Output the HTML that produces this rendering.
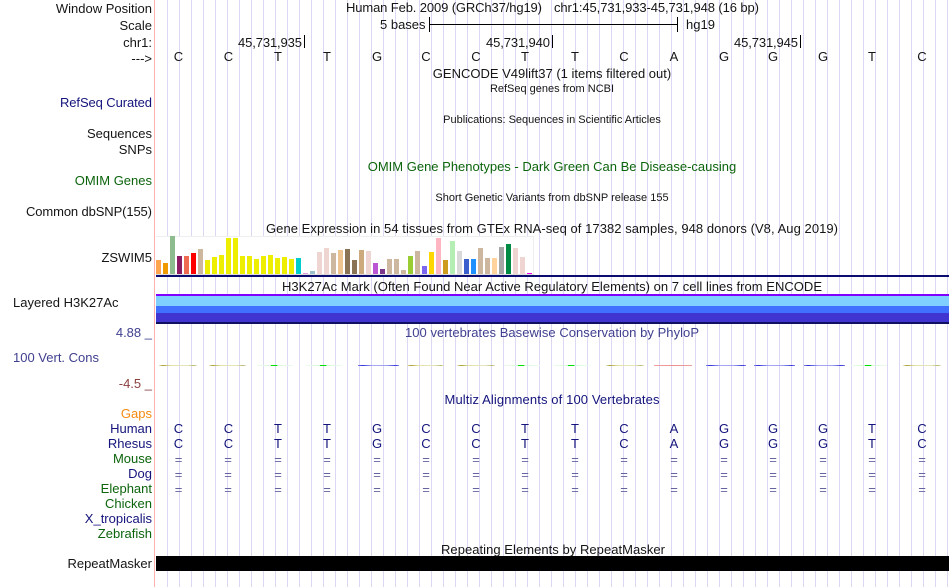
<!DOCTYPE html>
<html lang="en"><head><meta charset="utf-8"><title>Genome Browser</title>
<style>
html,body{margin:0;padding:0;background:#fff;width:950px;height:587px;overflow:hidden}
#g{position:absolute;left:156px;top:0;width:794px;height:587px;background:repeating-linear-gradient(to right,transparent 0,transparent 11px,#dcd8f4 11px,#dcd8f4 12px)}
#p{position:absolute;left:154px;top:0;width:1px;height:587px;background:#ffb0b0}
svg{position:absolute;left:0;top:0}
text{font-family:"Liberation Sans",sans-serif;font-size:13px;fill:#151515}
.r{text-anchor:end}.c{text-anchor:middle}.s{font-size:11px}
.n{fill:#14147c}.d{fill:#0c640c}.v{fill:#404090}.q{fill:#6464a0}
.b text,.b{text-anchor:middle}
</style></head><body>
<div id="g"></div><div id="p"></div>
<svg width="950" height="587" viewBox="0 0 950 587">
<defs>
<linearGradient id="o"><stop offset="0" stop-color="#e8e8c8"/><stop offset=".1" stop-color="#a8a030"/><stop offset=".3" stop-color="#e2e2a8"/><stop offset=".75" stop-color="#e6e6c0"/><stop offset=".92" stop-color="#b8b870"/><stop offset="1" stop-color="#e8e8d0"/></linearGradient>
<linearGradient id="u"><stop offset="0" stop-color="#8888e8"/><stop offset=".1" stop-color="#3030d8"/><stop offset=".35" stop-color="#a8a8f4"/><stop offset=".7" stop-color="#a0a0f0"/><stop offset=".92" stop-color="#3838d8"/><stop offset="1" stop-color="#8888e8"/></linearGradient>
<linearGradient id="e"><stop offset="0" stop-color="#f0a0a0"/><stop offset=".5" stop-color="#f09090"/><stop offset="1" stop-color="#e8a0a0"/></linearGradient>
<linearGradient id="f"><stop offset="0" stop-color="#f0fbf0"/><stop offset=".38" stop-color="#d8f8d8"/><stop offset=".39" stop-color="#00e000"/><stop offset=".56" stop-color="#00e000"/><stop offset=".57" stop-color="#d8f8d8"/><stop offset="1" stop-color="#f0fbf0"/></linearGradient>
</defs>

<text class="r" x="152" y="13">Window Position</text>
<text class="r" x="152" y="30">Scale</text>
<text class="r" x="152" y="47">chr1:</text>
<text class="r" x="152" y="63">---&gt;</text>
<text x="346" y="12" textLength="196">Human Feb. 2009 (GRCh37/hg19)</text>
<text x="554" y="12" textLength="205">chr1:45,731,933-45,731,948 (16 bp)</text>
<text x="380" y="29">5 bases</text>
<text x="686" y="29">hg19</text>
<g shape-rendering="crispEdges" fill="#000">
<rect x="429" y="17" width="1" height="15"/><rect x="677" y="17" width="1" height="15"/><rect x="430" y="24" width="247" height="1"/>
<rect x="304" y="35" width="1" height="13"/><rect x="552" y="35" width="1" height="13"/><rect x="800" y="35" width="1" height="13"/>
</g>
<text class="r" x="302" y="47" textLength="64">45,731,935</text>
<text class="r" x="550" y="47" textLength="64">45,731,940</text>
<text class="r" x="798" y="47" textLength="64">45,731,945</text>

<g class="b">
<text x="178.5" y="61">C</text><text x="228.5" y="61">C</text><text x="278" y="61">T</text><text x="327" y="61">T</text><text x="377" y="61">G</text><text x="426" y="61">C</text><text x="476" y="61">C</text><text x="525" y="61">T</text><text x="575" y="61">T</text><text x="624" y="61">C</text><text x="674" y="61">A</text><text x="724" y="61">G</text><text x="773" y="61">G</text><text x="823" y="61">G</text><text x="872" y="61">T</text><text x="922" y="61">C</text>
</g>

<text class="c" x="552" y="78">GENCODE V49lift37 (1 items filtered out)</text>
<text class="c s" x="552" y="92">RefSeq genes from NCBI</text>
<text class="r n" x="152" y="107" textLength="92">RefSeq Curated</text>
<text class="c s" x="552" y="123">Publications: Sequences in Scientific Articles</text>
<text class="r" x="152" y="138">Sequences</text>
<text class="r" x="152" y="154">SNPs</text>
<text class="c d" x="552" y="171">OMIM Gene Phenotypes - Dark Green Can Be Disease-causing</text>
<text class="r d" x="152" y="185">OMIM Genes</text>
<text class="c s" x="552" y="201">Short Genetic Variants from dbSNP release 155</text>
<text class="r" x="152" y="216" textLength="126">Common dbSNP(155)</text>
<text class="c" x="552" y="233" textLength="572">Gene Expression in 54 tissues from GTEx RNA-seq of 17382 samples, 948 donors (V8, Aug 2019)</text>
<text class="r" x="152" y="262">ZSWIM5</text>

<g shape-rendering="crispEdges">
<rect x="156" y="236" width="378" height="39" fill="#fff"/>
<rect x="156" y="236" width="378" height="1" fill="#eee"/><rect x="533" y="236" width="1" height="39" fill="#eee"/><rect x="156" y="274" width="378" height="1" fill="#ddd"/>
<rect x="156" y="260" width="5" height="14" fill="#FFA54F"/>
<rect x="163" y="263" width="5" height="11" fill="#EE9A00"/>
<rect x="170" y="236" width="5" height="38" fill="#8FBC8F"/>
<rect x="177" y="256" width="5" height="18" fill="#8B1C62"/>
<rect x="184" y="256" width="5" height="18" fill="#EE6A50"/>
<rect x="191" y="253" width="5" height="21" fill="#FF0000"/>
<rect x="198" y="249" width="5" height="25" fill="#CDB79E"/>
<rect x="205" y="260" width="5" height="14" fill="#EEEE00"/>
<rect x="212" y="257" width="5" height="17" fill="#EEEE00"/>
<rect x="219" y="255" width="5" height="19" fill="#EEEE00"/>
<rect x="226" y="238" width="5" height="36" fill="#EEEE00"/>
<rect x="233" y="238" width="5" height="36" fill="#EEEE00"/>
<rect x="240" y="256" width="5" height="18" fill="#EEEE00"/>
<rect x="247" y="256" width="5" height="18" fill="#EEEE00"/>
<rect x="254" y="259" width="5" height="15" fill="#EEEE00"/>
<rect x="261" y="256" width="5" height="18" fill="#EEEE00"/>
<rect x="268" y="255" width="5" height="19" fill="#EEEE00"/>
<rect x="275" y="258" width="5" height="16" fill="#EEEE00"/>
<rect x="282" y="257" width="5" height="17" fill="#EEEE00"/>
<rect x="289" y="259" width="5" height="15" fill="#EEEE00"/>
<rect x="296" y="258" width="5" height="16" fill="#00CDCD"/>
<rect x="303" y="273" width="5" height="1" fill="#DDA0DD"/>
<rect x="310" y="271" width="5" height="3" fill="#9AC0CD"/>
<rect x="317" y="252" width="5" height="22" fill="#EED5D2"/>
<rect x="324" y="248" width="5" height="26" fill="#EED5D2"/>
<rect x="331" y="253" width="5" height="21" fill="#CDB79E"/>
<rect x="338" y="250" width="5" height="24" fill="#EEC591"/>
<rect x="345" y="249" width="5" height="25" fill="#8B7355"/>
<rect x="352" y="260" width="5" height="14" fill="#8B7355"/>
<rect x="359" y="250" width="5" height="24" fill="#CDAA7D"/>
<rect x="366" y="251" width="5" height="23" fill="#EED5D2"/>
<rect x="373" y="263" width="5" height="11" fill="#BA55D3"/>
<rect x="380" y="269" width="5" height="5" fill="#7A378B"/>
<rect x="387" y="259" width="5" height="15" fill="#CDB79E"/>
<rect x="394" y="259" width="5" height="15" fill="#CDB79E"/>
<rect x="401" y="270" width="5" height="4" fill="#CDB79E"/>
<rect x="408" y="256" width="5" height="18" fill="#9ACD32"/>
<rect x="415" y="251" width="5" height="23" fill="#CDB79E"/>
<rect x="422" y="266" width="5" height="8" fill="#7B68EE"/>
<rect x="429" y="252" width="5" height="22" fill="#FFD700"/>
<rect x="436" y="238" width="5" height="36" fill="#FFB6C1"/>
<rect x="443" y="260" width="5" height="14" fill="#CD9B1D"/>
<rect x="450" y="241" width="5" height="33" fill="#B4EEB4"/>
<rect x="457" y="251" width="5" height="23" fill="#D9D9D9"/>
<rect x="464" y="259" width="5" height="15" fill="#3A5FCD"/>
<rect x="471" y="259" width="5" height="15" fill="#1E90FF"/>
<rect x="478" y="248" width="5" height="26" fill="#CDB79E"/>
<rect x="485" y="258" width="5" height="16" fill="#CDB79E"/>
<rect x="492" y="258" width="5" height="16" fill="#FFD39B"/>
<rect x="499" y="247" width="5" height="27" fill="#A6A6A6"/>
<rect x="506" y="244" width="5" height="30" fill="#008B45"/>
<rect x="513" y="248" width="5" height="26" fill="#EED5D2"/>
<rect x="520" y="257" width="5" height="17" fill="#EED5D2"/>
<rect x="527" y="273" width="5" height="1" fill="#EE00EE"/>
<rect x="156" y="275" width="793" height="2" fill="#0c0c70"/>
<rect x="156" y="294" width="793" height="2" fill="#7f00ff"/>
<rect x="156" y="296" width="793" height="10" fill="#7fd0ff"/>
<rect x="156" y="306" width="793" height="7" fill="#4070ff"/>
<rect x="156" y="313" width="793" height="9" fill="#4035d0"/>
<rect x="156" y="322" width="793" height="2" fill="#101060"/>
<rect x="159" y="365" width="38" height="1" fill="url(#o)"/>
<rect x="209" y="365" width="37" height="1" fill="url(#o)"/>
<rect x="257" y="365" width="36" height="1" fill="url(#f)"/>
<rect x="306" y="365" width="36" height="1" fill="url(#f)"/>
<rect x="358" y="365" width="41" height="1" fill="url(#u)"/>
<rect x="407" y="365" width="37" height="1" fill="url(#o)"/>
<rect x="457" y="365" width="38" height="1" fill="url(#o)"/>
<rect x="504" y="365" width="36" height="1" fill="url(#f)"/>
<rect x="554" y="365" width="36" height="1" fill="url(#f)"/>
<rect x="606" y="365" width="38" height="1" fill="url(#o)"/>
<rect x="654" y="365" width="38" height="1" fill="url(#e)"/>
<rect x="706" y="365" width="40" height="1" fill="url(#u)"/>
<rect x="754" y="365" width="41" height="1" fill="url(#u)"/>
<rect x="804" y="365" width="41" height="1" fill="url(#u)"/>
<rect x="851" y="365" width="36" height="1" fill="url(#f)"/>
<rect x="903" y="365" width="38" height="1" fill="url(#o)"/>
<rect x="156" y="556" width="793" height="15" fill="#000"/>
</g>

<text class="c" x="552" y="291" textLength="540">H3K27Ac Mark (Often Found Near Active Regulatory Elements) on 7 cell lines from ENCODE</text>
<text x="13" y="307">Layered H3K27Ac</text>
<text class="r v" x="152" y="337">4.88 _</text>
<text class="c v" x="552" y="337" textLength="294">100 vertebrates Basewise Conservation by PhyloP</text>
<text class="v" x="13" y="362">100 Vert. Cons</text>
<text class="r" x="152" y="388" style="fill:#8c4040">-4.5 _</text>
<text class="c n" x="552" y="404" textLength="215">Multiz Alignments of 100 Vertebrates</text>

<text class="r" x="152" y="418" style="fill:#f58a10">Gaps</text>
<text class="r n" x="152" y="433">Human</text>
<text class="r n" x="152" y="448">Rhesus</text>
<text class="r d" x="152" y="463">Mouse</text>
<text class="r n" x="152" y="478">Dog</text>
<text class="r d" x="152" y="493">Elephant</text>
<text class="r d" x="152" y="508">Chicken</text>
<text class="r n" x="152" y="523">X_tropicalis</text>
<text class="r d" x="152" y="538">Zebrafish</text>
<text class="r" x="152" y="568">RepeatMasker</text>
<text class="c" x="553" y="554" textLength="224">Repeating Elements by RepeatMasker</text>

<g class="b n">
<text class="n" x="178.5" y="433">C</text><text class="n" x="228.5" y="433">C</text><text class="n" x="278" y="433">T</text><text class="n" x="327" y="433">T</text><text class="n" x="377" y="433">G</text><text class="n" x="426" y="433">C</text><text class="n" x="476" y="433">C</text><text class="n" x="525" y="433">T</text><text class="n" x="575" y="433">T</text><text class="n" x="624" y="433">C</text><text class="n" x="674" y="433">A</text><text class="n" x="724" y="433">G</text><text class="n" x="773" y="433">G</text><text class="n" x="823" y="433">G</text><text class="n" x="872" y="433">T</text><text class="n" x="922" y="433">C</text>
<text class="n" x="178.5" y="448">C</text><text class="n" x="228.5" y="448">C</text><text class="n" x="278" y="448">T</text><text class="n" x="327" y="448">T</text><text class="n" x="377" y="448">G</text><text class="n" x="426" y="448">C</text><text class="n" x="476" y="448">C</text><text class="n" x="525" y="448">T</text><text class="n" x="575" y="448">T</text><text class="n" x="624" y="448">C</text><text class="n" x="674" y="448">A</text><text class="n" x="724" y="448">G</text><text class="n" x="773" y="448">G</text><text class="n" x="823" y="448">G</text><text class="n" x="872" y="448">T</text><text class="n" x="922" y="448">C</text>
<text class="q" x="178.5" y="464">=</text><text class="q" x="228" y="464">=</text><text class="q" x="278" y="464">=</text><text class="q" x="327" y="464">=</text><text class="q" x="377" y="464">=</text><text class="q" x="426" y="464">=</text><text class="q" x="476" y="464">=</text><text class="q" x="525" y="464">=</text><text class="q" x="575" y="464">=</text><text class="q" x="624" y="464">=</text><text class="q" x="674" y="464">=</text><text class="q" x="724" y="464">=</text><text class="q" x="773" y="464">=</text><text class="q" x="823" y="464">=</text><text class="q" x="872" y="464">=</text><text class="q" x="922" y="464">=</text>
<text class="q" x="178.5" y="479">=</text><text class="q" x="228" y="479">=</text><text class="q" x="278" y="479">=</text><text class="q" x="327" y="479">=</text><text class="q" x="377" y="479">=</text><text class="q" x="426" y="479">=</text><text class="q" x="476" y="479">=</text><text class="q" x="525" y="479">=</text><text class="q" x="575" y="479">=</text><text class="q" x="624" y="479">=</text><text class="q" x="674" y="479">=</text><text class="q" x="724" y="479">=</text><text class="q" x="773" y="479">=</text><text class="q" x="823" y="479">=</text><text class="q" x="872" y="479">=</text><text class="q" x="922" y="479">=</text>
<text class="q" x="178.5" y="494">=</text><text class="q" x="228" y="494">=</text><text class="q" x="278" y="494">=</text><text class="q" x="327" y="494">=</text><text class="q" x="377" y="494">=</text><text class="q" x="426" y="494">=</text><text class="q" x="476" y="494">=</text><text class="q" x="525" y="494">=</text><text class="q" x="575" y="494">=</text><text class="q" x="624" y="494">=</text><text class="q" x="674" y="494">=</text><text class="q" x="724" y="494">=</text><text class="q" x="773" y="494">=</text><text class="q" x="823" y="494">=</text><text class="q" x="872" y="494">=</text><text class="q" x="922" y="494">=</text>
</g>
</svg>
</body></html>
